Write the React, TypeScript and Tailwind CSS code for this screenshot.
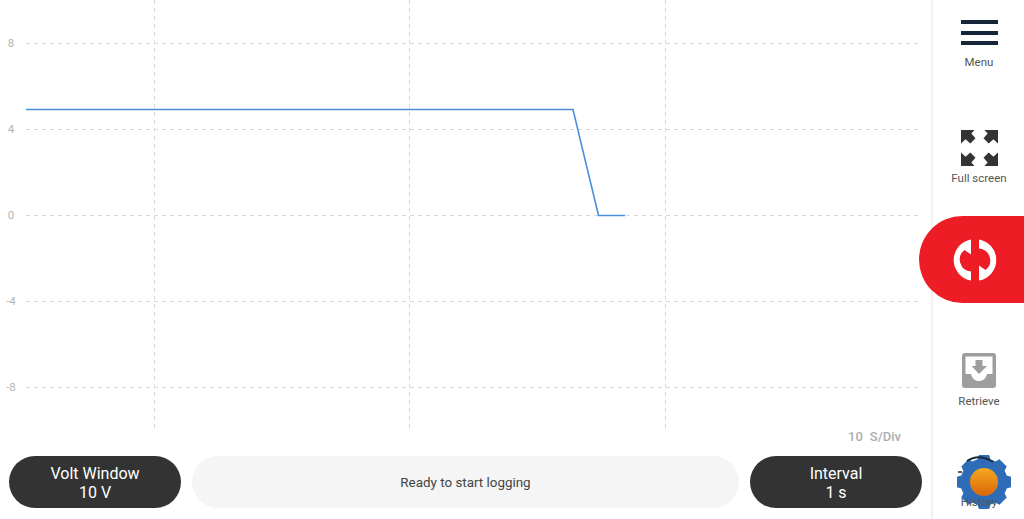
const yTicks = [
  { y: 43.5, label: "8" },
  { y: 129.5, label: "4" },
  { y: 215.5, label: "0" },
  { y: 301.5, label: "-4" },
  { y: 387.5, label: "-8" },
];
const xTicks = [154.5, 409.5, 665.5];

// 8 tooth gear outline, center 27,27
function gearPoints() {
  const pts: string[] = [];
  const teeth = 8;
  for (let i = 0; i < teeth; i++) {
    const a = (i / teeth) * Math.PI * 2 - Math.PI / 2;
    const step = (Math.PI * 2) / teeth;
    const rows: [number, number][] = [
      [-0.5, 23.5],
      [-0.36, 23.5],
      [-0.24, 27.5],
      [0.24, 27.5],
      [0.36, 23.5],
    ];
    rows.forEach(([o, r]) => {
      const t = a + o * step;
      pts.push(`${(27 + Math.cos(t) * r).toFixed(2)},${(27 + Math.sin(t) * r).toFixed(2)}`);
    });
  }
  return pts.join(" ");
}

function Chart() {
  return (
    <svg width="931" height="428" className="block">
      {yTicks.map((t) => (
        <g key={t.y}>
          <line x1="26" x2="918" y1={t.y} y2={t.y} stroke="#d8d8d8" strokeDasharray="4 4" />
          <text x="11" y={t.y + 3.5} textAnchor="middle" fontSize="11.5" fill="#b5b5b5" fontFamily="Roboto, sans-serif">
            {t.label}
          </text>
        </g>
      ))}
      {xTicks.map((x) => (
        <line key={x} x1={x} x2={x} y1="0" y2="428" stroke="#d8d8d8" strokeDasharray="4 4" />
      ))}
      <polyline points="26,109.5 573,109.5 598.5,215.5 625,215.5" fill="none" stroke="#4a8fdd" strokeWidth="1.6" />
    </svg>
  );
}

function MenuIcon() {
  return (
    <div className="flex w-[37px] flex-col gap-[6.5px]">
      <div className="h-[4px] bg-[#15263a]" />
      <div className="h-[4px] bg-[#15263a]" />
      <div className="h-[4px] bg-[#15263a]" />
    </div>
  );
}

function FullScreenIcon() {
  const arrow = "M0 0H13.5L10.3 3.6L14.5 8.3L9.3 13.5L4.6 9.3L0 13.5Z";
  return (
    <svg width="37" height="36" viewBox="0 0 37 36" fill="#333333">
      <path d={arrow} />
      <path d={arrow} transform="translate(37 0) scale(-1 1)" />
      <path d={arrow} transform="translate(0 36) scale(1 -1)" />
      <path d={arrow} transform="translate(37 36) scale(-1 -1)" />
    </svg>
  );
}

function RetrieveIcon() {
  return (
    <svg width="34" height="35" viewBox="0 0 34 35">
      <rect width="34" height="35" rx="3" fill="#9e9e9e" />
      <path
        d="M3.5 3.5H30.5V21H25C24 25.5 21 28 17 28C13 28 10 25.5 9 21H3.5Z"
        fill="#ffffff"
      />
      <path d="M13.5 7H20.5V13H25L17 21L9.5 13H13.5Z" fill="#9e9e9e" />
    </svg>
  );
}

function SyncIcon() {
  const half = "M-4 -20.5A20.8 20.8 0 0 0 -4 20.5V11.5A12 12 0 0 1 -10.5 -10L-4 -5.5Z";
  return (
    <svg width="48" height="48" viewBox="-24 -24 48 48" fill="#ffffff">
      <path d={half} />
      <path d={half} transform="rotate(180)" />
    </svg>
  );
}

function GearIcon() {
  return (
    <svg width="54" height="54" viewBox="0 0 54 54">
      <defs>
        <linearGradient id="knob" x1="0" y1="0" x2="0" y2="1">
          <stop offset="0" stopColor="#f8a81e" />
          <stop offset="1" stopColor="#d8660a" />
        </linearGradient>
      </defs>
      <polygon points={gearPoints()} fill="#2f6cb8" />
      <path d="M10 6Q22 -2 36 7" fill="none" stroke="#1b2a3a" strokeWidth="1.8" />
      <path d="M1 17L5 17" fill="none" stroke="#1b2a3a" strokeWidth="1.5" />
      <circle cx="27" cy="27" r="14" fill="url(#knob)" />
    </svg>
  );
}

function Pill({ title, value }: { title: string; value: string }) {
  return (
    <div className="flex h-[52px] w-[172px] flex-col items-center justify-center rounded-full bg-[#333333] pt-[2px] text-[16px] leading-[19px] text-white">
      <span>{title}</span>
      <span>{value}</span>
    </div>
  );
}

export default function App() {
  return (
    <div className="relative flex h-[519px] w-[1024px] overflow-hidden bg-white font-['Roboto',sans-serif]">
      <div className="flex w-[931px] flex-col">
        <Chart />
        <div className="flex h-[18px] items-center justify-end gap-[7px] pr-[30px] text-[13px] font-medium text-[#adadad]">
          <span>10</span>
          <span>S/Div</span>
        </div>
        <div className="flex gap-[11px] pl-[9px] pt-[10px]">
          <Pill title="Volt Window" value="10 V" />
          <div className="flex h-[52px] w-[547px] items-center justify-center rounded-full bg-[#f5f5f5] pt-[2px] text-[13.4px] text-[#444444]">
            Ready to start logging
          </div>
          <Pill title="Interval" value="1 s" />
        </div>
      </div>

      <div className="flex w-[93px] flex-col items-center border-l-2 border-[#f1f1f1] pl-[1px] pt-[20px] text-[11.5px] leading-[14px] text-[#555555]">
        <MenuIcon />
        <span className="mt-[10px]">Menu</span>
        <div className="mt-[61px]">
          <FullScreenIcon />
        </div>
        <span className="mt-[5px]">Full screen</span>
        <div className="mt-[168px]">
          <RetrieveIcon />
        </div>
        <span className="mt-[6px]">Retrieve</span>
        <div className="relative mt-[87px] flex w-full justify-center">
          <div className="absolute left-[23px] top-[-40px]">
            <GearIcon />
          </div>
          <span className="relative">History</span>
        </div>
      </div>

      <div className="absolute left-[919px] top-[216px] flex h-[87px] w-[105px] items-center rounded-l-full bg-[#ee1c25] pl-[32px]">
        <SyncIcon />
      </div>
    </div>
  );
}
